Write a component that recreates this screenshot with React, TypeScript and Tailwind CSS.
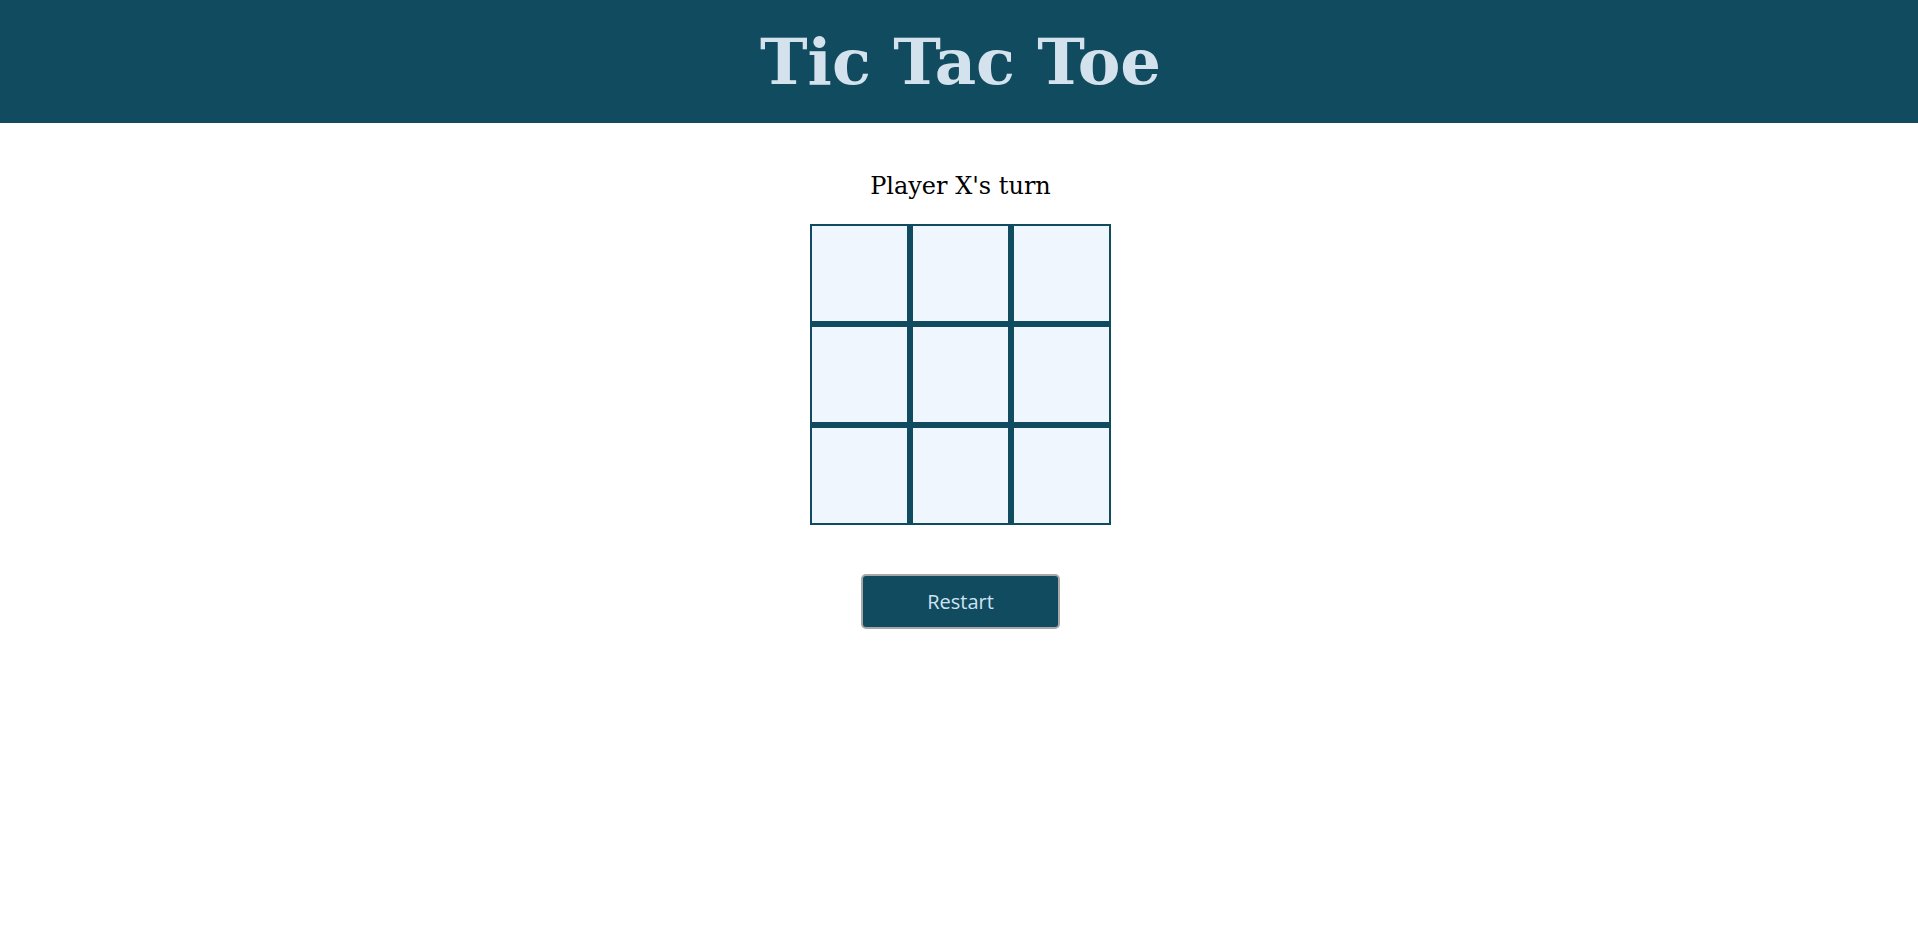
export default function App() {
  const cells = Array.from({ length: 9 });

  return (
    <div className="min-h-screen bg-white">
      {/* Header */}
      <header className="h-[123px] pl-[3px] bg-[#114b5f] flex items-center justify-center">
        <h1 className="text-[64px] font-bold text-[#d3e2ec] font-['DejaVu_Serif',serif] leading-none">
          Tic Tac Toe
        </h1>
      </header>

      {/* Board */}
      <main className="pl-[3px] flex flex-col items-center">
        <p className="mt-[49px] text-[24px] leading-[28px] text-black font-['DejaVu_Serif',serif]">
          Player X's turn
        </p>

        <div className="mt-[24px] grid grid-cols-[repeat(3,99px)] gap-[2px] bg-[#114b5f]">
          {cells.map((_, i) => (
            <div key={i} className="h-[99px] w-[99px] border-2 border-[#114b5f] bg-[#eff6fe]" />
          ))}
        </div>

        <button className="mt-[49px] h-[55px] w-[199px] rounded-[5px] border-2 border-[#a8a8a8] bg-[#114b5f] text-[20px] text-[#cfe3f0] font-['Open_Sans',sans-serif]">
          Restart
        </button>
      </main>
    </div>
  );
}
